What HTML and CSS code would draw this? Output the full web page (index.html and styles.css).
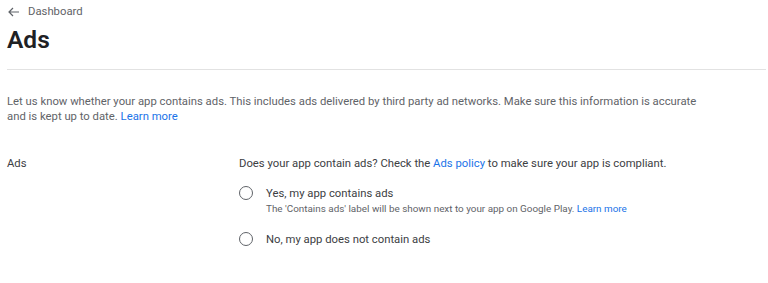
FILE: index.html
```html
<!DOCTYPE html>
<html lang="en">
<head>
    <meta charset="UTF-8">
    <title>Ads</title>
    <link rel="stylesheet" href="styles.css">
</head>
<body>
    <div class="page">
        <div class="header">
            <a class="back-link" href="#">
                <svg class="back-arrow" width="12" height="10" viewBox="0 0 12 10">
                    <path d="M11 5H1.5M5 1L1 5l4 4" fill="none" stroke="#5f6368" stroke-width="1.2"/>
                </svg>
                Dashboard
            </a>
            <h1>Ads</h1>
        </div>

        <p class="intro">Let us know whether your app contains ads. This includes ads delivered by third party ad networks. Make sure this information is accurate and is kept up to date. <a href="#">Learn more</a></p>

        <div class="section">
            <div class="section-label">Ads</div>
            <div class="section-body">
                <div class="question">Does your app contain ads? Check the <a href="#">Ads policy</a> to make sure your app is compliant.</div>

                <label class="option">
                    <span class="radio"></span>
                    <span class="option-text">
                        <span class="option-title">Yes, my app contains ads</span>
                        <span class="option-help">The 'Contains ads' label will be shown next to your app on Google Play. <a href="#">Learn more</a></span>
                    </span>
                </label>

                <label class="option">
                    <span class="radio"></span>
                    <span class="option-text">
                        <span class="option-title">No, my app does not contain ads</span>
                    </span>
                </label>
            </div>
        </div>
    </div>
</body>
</html>
```

FILE: styles.css
```css
body {
    margin: 0;
    background-color: #ffffff;
    font-family: Roboto, 'Liberation Sans', sans-serif;
    color: #3c4043;
}
.page {
    padding: 0 2px 0 7px;
}
a {
    color: #1a73e8;
    text-decoration: none;
}
.header {
    border-bottom: 1px solid #e2e2e2;
    padding-top: 5px;
    padding-bottom: 14px;
}
.back-link {
    display: flex;
    align-items: center;
    gap: 8px;
    color: #5f6368;
    font-size: 11.3px;
    line-height: 14px;
}
.back-arrow {
    margin-left: 1px;
}
h1 {
    margin: 6px 0 0 0;
    font-size: 24.5px;
    line-height: 30px;
    font-weight: 600;
    color: #202124;
}
.intro {
    margin: 24px 0 0 0;
    font-size: 11.3px;
    line-height: 15px;
    color: #5f6368;
    max-width: 705px;
}
.section {
    display: flex;
    margin-top: 32px;
}
.section-label {
    width: 232px;
    font-size: 11.3px;
    line-height: 15px;
}
.section-body {
    display: flex;
    flex-direction: column;
}
.question {
    font-size: 11.3px;
    line-height: 15px;
}
.option {
    display: flex;
    align-items: flex-start;
    margin-top: 15px;
}
.option + .option {
    margin-top: 16px;
}
.radio {
    width: 12px;
    height: 12px;
    border: 1.8px solid #5f6368;
    border-radius: 50%;
    margin-right: 13px;
    flex-shrink: 0;
}
.option-text {
    display: flex;
    flex-direction: column;
}
.option-title {
    font-size: 11.3px;
    line-height: 15px;
}
.option-help {
    font-size: 9.9px;
    line-height: 15px;
    color: #5f6368;
}
```
